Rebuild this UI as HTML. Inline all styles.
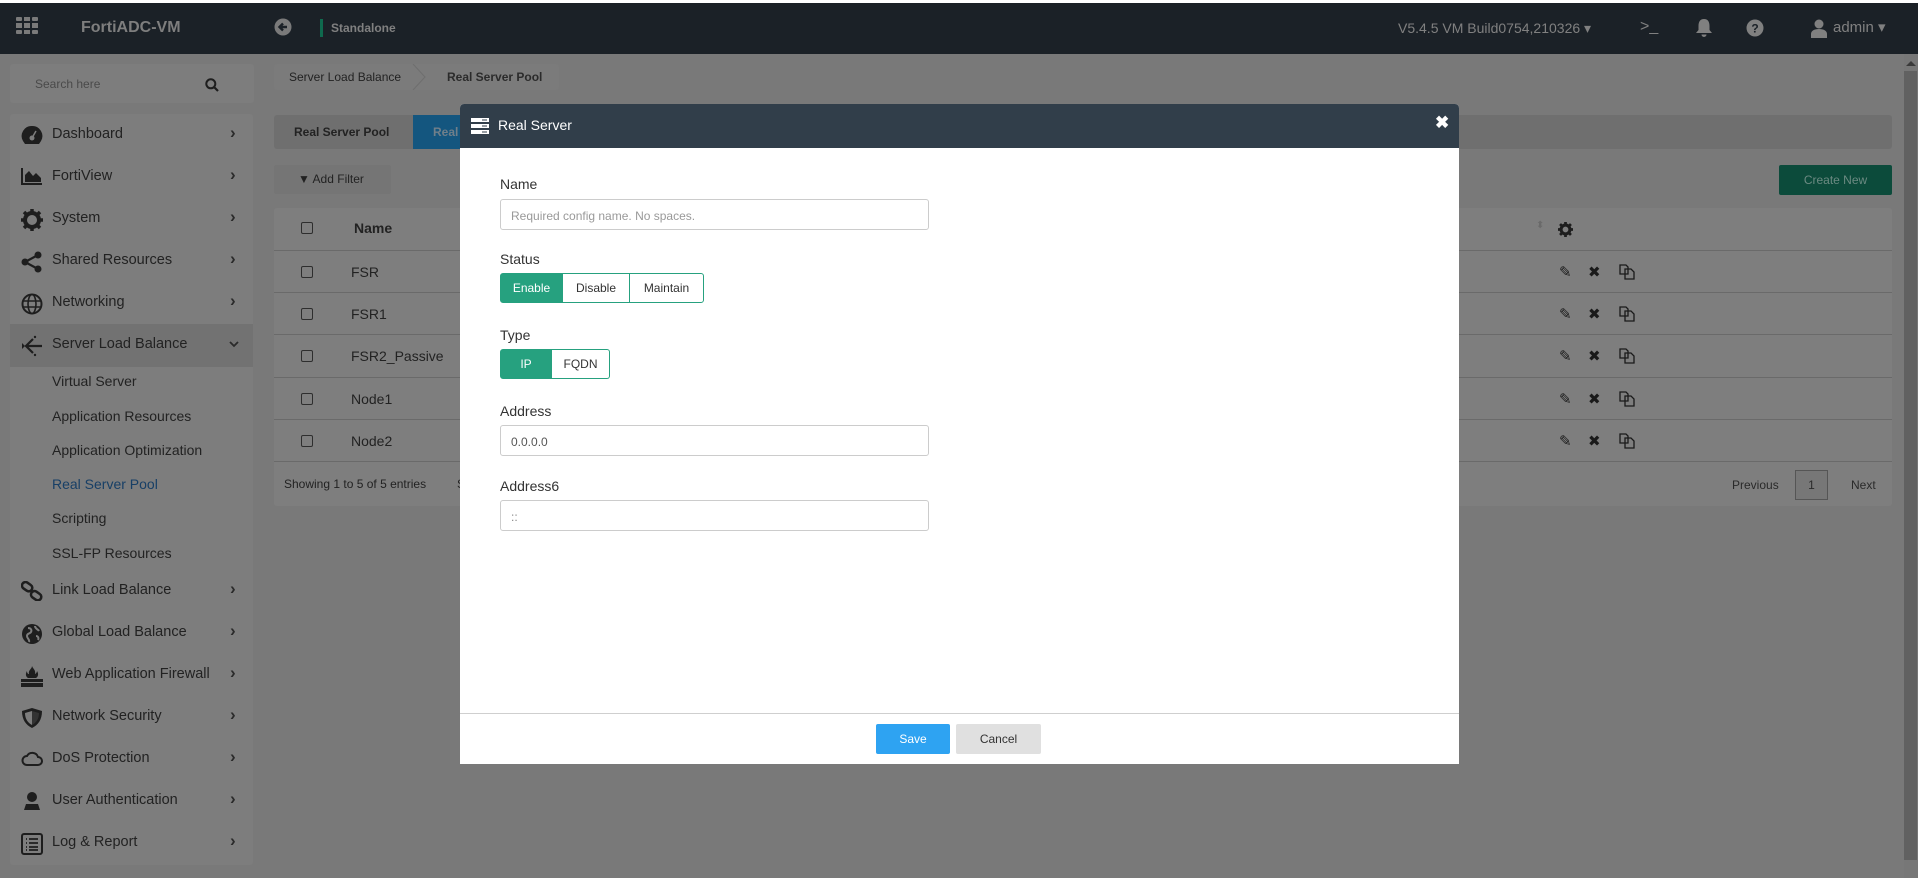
<!DOCTYPE html>
<html><head><meta charset="utf-8"><style>
*{box-sizing:border-box;margin:0;padding:0}
body{width:1918px;height:878px;overflow:hidden;background:#797979;font-family:"Liberation Sans",sans-serif;position:relative;color:#1e1e1e}
.a{position:absolute}
.hdr{left:0;top:0;width:1918px;height:54px;background:#1b2127;color:#7d7d7d}
.menu{left:10px;top:114px;width:243px;height:751px;background:#7d7d7d;border-radius:3px}
.mi{position:absolute;left:0;width:243px;height:42px;font-size:14.5px;color:#222}
.mi .t{position:absolute;left:42px;top:12px}
.mi .c{position:absolute;left:220px;top:9px;font-size:17px;font-weight:bold;color:#2a2a2a}
.mi svg{position:absolute;left:11px;top:11px}
.sub{position:absolute;left:42px;font-size:14px;color:#222}
.panel{background:#7e7e7e;border-radius:3px}
.row{position:absolute;left:0;width:1618px;height:42px;border-top:1px solid #6a6a6a}
.cb{position:absolute;left:27px;top:15px;width:12px;height:12px;border:1px solid #2e2e2e;border-radius:2px}
.rn{position:absolute;left:77px;top:13px;font-size:14px;color:#222}
.act{position:absolute;top:12px;font-size:15px;color:#1a1a1a}
.cp{position:absolute;left:1345px;top:13px}
.lbl{position:absolute;left:500px;font-size:14px;color:#333}
.inp{position:absolute;left:500px;width:429px;height:31px;border:1px solid #ccc;border-radius:3px;font-size:12px;padding:9px 10px;color:#555}
.bg{position:absolute;height:30px;border:1px solid #26a17f;font-size:12px;text-align:center;line-height:28px;color:#333;background:#fff}
.on{background:#26a17f;color:#fff}
</style></head><body>
<div class="a" style="left:0;top:0;width:1918px;height:3px;background:#fff"></div>
<div class="a hdr" style="top:3px;height:51px">
  <svg class="a" style="left:16px;top:14px" width="22" height="17" viewBox="0 0 22 17"><g fill="#7a7a7a"><rect x="0" y="0" width="6" height="4" rx="1"/><rect x="8" y="0" width="6" height="4"/><rect x="16" y="0" width="6" height="4" rx="1"/><rect x="0" y="6" width="6" height="5"/><rect x="8" y="6" width="6" height="5"/><rect x="16" y="6" width="6" height="5"/><rect x="0" y="13" width="6" height="4" rx="1"/><rect x="8" y="13" width="6" height="4"/><rect x="16" y="13" width="6" height="4" rx="1"/></g></svg>
  <div class="a" style="left:81px;top:16px;font-size:16px;font-weight:bold;color:#7e7e7e">FortiADC-VM</div>
  <svg class="a" style="left:274px;top:15px" width="18" height="18" viewBox="0 0 18 18"><circle cx="9" cy="9" r="8.5" fill="#7a7a7a"/><path d="M13 9H6M9 5.5L5.5 9 9 12.5" stroke="#1b2127" stroke-width="2.4" fill="none"/></svg>
  <div class="a" style="left:320px;top:16px;width:3px;height:18px;background:#0f6a4e"></div>
  <div class="a" style="left:331px;top:18px;font-size:12px;font-weight:bold;color:#808080">Standalone</div>
  <div class="a" style="left:1398px;top:17px;font-size:14px;color:#808080">V5.4.5 VM Build0754,210326 ▾</div>
  <div class="a" style="left:1640px;top:15px;font-size:16px;color:#808080">&gt;_</div>
  <svg class="a" style="left:1695px;top:15px" width="18" height="20" viewBox="0 0 18 20"><path d="M9 1C5 1 3.5 4 3.5 8v4L1 15h16l-2.5-3V8C14.5 4 13 1 9 1zM6.5 16.5a2.5 2.5 0 0 0 5 0z" fill="#808080"/></svg>
  <svg class="a" style="left:1746px;top:16px" width="18" height="18" viewBox="0 0 18 18"><circle cx="9" cy="9" r="8.5" fill="#808080"/><text x="9" y="13.5" font-size="12" font-weight="bold" text-anchor="middle" fill="#1b2127" font-family="Liberation Sans">?</text></svg>
  <svg class="a" style="left:1811px;top:16px" width="16" height="19" viewBox="0 0 16 19"><circle cx="8" cy="5" r="4.5" fill="#808080"/><path d="M0 19v-4c0-3 3-5 8-5s8 2 8 5v4z" fill="#808080"/></svg>
  <div class="a" style="left:1833px;top:15px;font-size:15px;color:#808080">admin ▾</div>
</div>
<div class="a" style="left:1904px;top:54px;width:14px;height:824px;background:#777"></div>
<div class="a" style="left:1906px;top:61px;width:0;height:0;border-left:5px solid transparent;border-right:5px solid transparent;border-bottom:5px solid #3a3a3a"></div>
<div class="a" style="left:1904px;top:71px;width:13px;height:789px;background:#616161"></div>
<div class="a panel" style="left:10px;top:64px;width:244px;height:39px;background:#7d7d7d"></div>
<div class="a" style="left:35px;top:77px;font-size:12px;color:#4a4a4a">Search here</div>
<svg class="a" style="left:205px;top:78px" width="14" height="14" viewBox="0 0 14 14"><circle cx="5.8" cy="5.8" r="4.5" stroke="#1e1e1e" stroke-width="2" fill="none"/><path d="M9 9l4 4" stroke="#1e1e1e" stroke-width="2.2"/></svg>
<div class="a menu">
 <div class="mi" style="top:0"><svg width="22" height="20" viewBox="0 0 22 20"><path d="M11 1A10 10 0 0 0 2 16l2 3h14l2-3A10 10 0 0 0 11 1z" fill="#1e1e1e"/><circle cx="11" cy="13" r="2.5" fill="#7d7d7d"/><path d="M11 13l4-7" stroke="#7d7d7d" stroke-width="1.5"/></svg><span class="t">Dashboard</span><span class="c">›</span></div>
 <div class="mi" style="top:42px"><svg width="22" height="18" viewBox="0 0 22 18"><path d="M1 1v16h20" stroke="#1e1e1e" stroke-width="2" fill="none"/><path d="M4 15V8l4-4 4 5 3-3 5 5v4z" fill="#1e1e1e"/></svg><span class="t">FortiView</span><span class="c">›</span></div>
 <div class="mi" style="top:84px"><svg width="22" height="22" viewBox="0 0 22 22"><circle cx="11" cy="11" r="7" fill="none" stroke="#1e1e1e" stroke-width="4"/><path d="M11 0v5M11 17v5M0 11h5M17 11h5M3 3l3.5 3.5M15.5 15.5L19 19M3 19l3.5-3.5M15.5 6.5L19 3" stroke="#1e1e1e" stroke-width="3.5"/></svg><span class="t">System</span><span class="c">›</span></div>
 <div class="mi" style="top:126px"><svg width="22" height="22" viewBox="0 0 22 22"><circle cx="17" cy="4" r="3.5" fill="#1e1e1e"/><circle cx="4" cy="11" r="3.5" fill="#1e1e1e"/><circle cx="17" cy="18" r="3.5" fill="#1e1e1e"/><path d="M17 4L4 11l13 7" stroke="#1e1e1e" stroke-width="2.2" fill="none"/></svg><span class="t">Shared Resources</span><span class="c">›</span></div>
 <div class="mi" style="top:168px"><svg width="22" height="22" viewBox="0 0 22 22"><circle cx="11" cy="11" r="9.5" fill="none" stroke="#1e1e1e" stroke-width="2"/><ellipse cx="11" cy="11" rx="4" ry="9.5" fill="none" stroke="#1e1e1e" stroke-width="1.6"/><path d="M2 8h18M2 14h18" stroke="#1e1e1e" stroke-width="1.6"/></svg><span class="t">Networking</span><span class="c">›</span></div>
 <div class="mi" style="top:210px;background:#727272;height:43px"><svg width="22" height="22" viewBox="0 0 22 22"><path d="M12 4L5 11l7 7M5 11h16" stroke="#1e1e1e" stroke-width="2.2" fill="none"/><path d="M1 8v6l3-3z" fill="#1e1e1e"/><circle cx="14" cy="2" r="1.2" fill="#1e1e1e"/><circle cx="14" cy="20" r="1.2" fill="#1e1e1e"/></svg><span class="t">Server Load Balance</span><svg style="left:219px;top:17px" width="10" height="7" viewBox="0 0 10 7"><path d="M1 1l4 4 4-4" stroke="#2a2a2a" stroke-width="1.8" fill="none"/></svg></div>
 <div class="sub" style="top:259px">Virtual Server</div>
 <div class="sub" style="top:294px">Application Resources</div>
 <div class="sub" style="top:328px">Application Optimization</div>
 <div class="sub" style="top:362px;color:#173f66">Real Server Pool</div>
 <div class="sub" style="top:396px">Scripting</div>
 <div class="sub" style="top:431px">SSL-FP Resources</div>
 <div class="mi" style="top:456px"><svg width="22" height="20" viewBox="0 0 22 20"><rect x="1" y="2" width="11" height="7" rx="3.5" transform="rotate(35 6 5)" fill="none" stroke="#1e1e1e" stroke-width="2.5"/><rect x="10" y="11" width="11" height="7" rx="3.5" transform="rotate(35 15 14)" fill="none" stroke="#1e1e1e" stroke-width="2.5"/></svg><span class="t">Link Load Balance</span><span class="c">›</span></div>
 <div class="mi" style="top:498px"><svg width="22" height="22" viewBox="0 0 22 22"><circle cx="11" cy="11" r="10" fill="#1e1e1e"/><path d="M7 5c3 0 4 2 3 4s-4 1-4 4 3 3 2 6M14 3c0 3 3 3 4 5M15 13c2 0 3 2 2 4" stroke="#7d7d7d" stroke-width="2" fill="none"/></svg><span class="t">Global Load Balance</span><span class="c">›</span></div>
 <div class="mi" style="top:540px"><svg width="22" height="22" viewBox="0 0 22 22"><path d="M11 1c1 3 4 4 3 8 2-1 2-3 2-3 2 3 1 6-1 7H7c-2-1-3-4-1-7 0 2 1 3 2 3-1-4 3-5 3-8z" fill="#1e1e1e"/><rect x="0" y="14" width="22" height="3" fill="#1e1e1e"/><rect x="0" y="18" width="22" height="4" fill="#1e1e1e"/></svg><span class="t">Web Application Firewall</span><span class="c">›</span></div>
 <div class="mi" style="top:582px"><svg width="22" height="22" viewBox="0 0 22 22"><path d="M11 1L1 4c0 9 4 14 10 17 6-3 10-8 10-17z" fill="#1e1e1e"/><path d="M11 4L4 6c0 6 3 10 7 12z" fill="#7d7d7d"/><path d="M11 4l7 2c0 6-3 10-7 12z" fill="#333"/></svg><span class="t">Network Security</span><span class="c">›</span></div>
 <div class="mi" style="top:624px"><svg width="22" height="18" viewBox="0 0 22 18"><path d="M6 16h11a4 4 0 0 0 0-8 6 6 0 0 0-11-1A4.5 4.5 0 0 0 6 16z" fill="none" stroke="#1e1e1e" stroke-width="2"/></svg><span class="t">DoS Protection</span><span class="c">›</span></div>
 <div class="mi" style="top:666px"><svg width="22" height="20" viewBox="0 0 22 20"><circle cx="11" cy="6" r="5" fill="#1e1e1e"/><path d="M3 19l2-6h12l2 6z" fill="#1e1e1e"/></svg><span class="t">User Authentication</span><span class="c">›</span></div>
 <div class="mi" style="top:708px"><svg width="22" height="22" viewBox="0 0 22 22"><rect x="1" y="1" width="20" height="20" rx="2" fill="none" stroke="#1e1e1e" stroke-width="2"/><path d="M5 6h1M8 6h9M5 10h1M8 10h9M5 14h1M8 14h9M5 17h1M8 17h9" stroke="#1e1e1e" stroke-width="1.8"/></svg><span class="t">Log &amp; Report</span><span class="c">›</span></div>
</div>
<div class="a panel" style="left:274px;top:64px;width:285px;height:26px;background:#7b7b7b"></div>
<div class="a" style="left:289px;top:70px;font-size:12px;color:#222">Server Load Balance</div>
<svg class="a" style="left:412px;top:64px" width="14" height="26"><path d="M1 0l12 13L1 26" stroke="#6e6e6e" fill="none"/></svg>
<div class="a" style="left:447px;top:70px;font-size:12px;font-weight:bold;color:#2b2b2b">Real Server Pool</div>
<div class="a panel" style="left:274px;top:115px;width:1618px;height:34px;background:#6f6f6f"></div>
<div class="a" style="left:294px;top:125px;font-size:12px;font-weight:bold;color:#222">Real Server Pool</div>
<div class="a" style="left:413px;top:115px;width:50px;height:34px;background:#14567f"></div>
<div class="a" style="left:433px;top:125px;font-size:12px;font-weight:bold;color:#707f8a">Real</div>
<div class="a" style="left:274px;top:165px;width:117px;height:29px;background:#757575;border-radius:2px"></div>
<div class="a" style="left:298px;top:172px;font-size:12px;color:#222">▼ Add Filter</div>
<div class="a" style="left:1779px;top:165px;width:113px;height:30px;background:#0c4b3b;border-radius:2px;color:#6c8a82;font-size:12px;text-align:center;line-height:30px">Create New</div>
<div class="a panel" style="left:274px;top:208px;width:1618px;height:298px">
  <div class="cb" style="left:27px;top:14px"></div>
  <div class="a" style="left:80px;top:12px;font-size:14px;font-weight:bold;color:#222">Name</div>
  <div class="a" style="left:1262px;top:12px;font-size:10px;color:#6a6a6a">⬍</div>
  <svg class="a" style="left:1284px;top:14px" width="15" height="15" viewBox="0 0 22 22"><circle cx="11" cy="11" r="6.5" fill="none" stroke="#1e1e1e" stroke-width="4.5"/><path d="M11 0v5M11 17v5M0 11h5M17 11h5M3 3l3.5 3.5M15.5 15.5L19 19M3 19l3.5-3.5M15.5 6.5L19 3" stroke="#1e1e1e" stroke-width="4"/></svg>
  <div class="row" style="top:42px"><div class="cb"></div><div class="rn">FSR</div><div class="act" style="left:1285px">✎</div><div class="act" style="left:1314px">✖</div><svg class="cp" width="16" height="16" viewBox="0 0 16 16"><path d="M1 1h6l2 2v7H1zM6 5h6l3 3v7H6z" fill="none" stroke="#1a1a1a" stroke-width="1.3"/></svg></div>
  <div class="row" style="top:84px"><div class="cb"></div><div class="rn">FSR1</div><div class="act" style="left:1285px">✎</div><div class="act" style="left:1314px">✖</div><svg class="cp" width="16" height="16" viewBox="0 0 16 16"><path d="M1 1h6l2 2v7H1zM6 5h6l3 3v7H6z" fill="none" stroke="#1a1a1a" stroke-width="1.3"/></svg></div>
  <div class="row" style="top:126px"><div class="cb"></div><div class="rn">FSR2_Passive</div><div class="act" style="left:1285px">✎</div><div class="act" style="left:1314px">✖</div><svg class="cp" width="16" height="16" viewBox="0 0 16 16"><path d="M1 1h6l2 2v7H1zM6 5h6l3 3v7H6z" fill="none" stroke="#1a1a1a" stroke-width="1.3"/></svg></div>
  <div class="row" style="top:169px"><div class="cb"></div><div class="rn">Node1</div><div class="act" style="left:1285px">✎</div><div class="act" style="left:1314px">✖</div><svg class="cp" width="16" height="16" viewBox="0 0 16 16"><path d="M1 1h6l2 2v7H1zM6 5h6l3 3v7H6z" fill="none" stroke="#1a1a1a" stroke-width="1.3"/></svg></div>
  <div class="row" style="top:211px"><div class="cb"></div><div class="rn">Node2</div><div class="act" style="left:1285px">✎</div><div class="act" style="left:1314px">✖</div><svg class="cp" width="16" height="16" viewBox="0 0 16 16"><path d="M1 1h6l2 2v7H1zM6 5h6l3 3v7H6z" fill="none" stroke="#1a1a1a" stroke-width="1.3"/></svg></div>
  <div class="row" style="top:253px;height:45px"></div>
  <div class="a" style="left:10px;top:269px;font-size:12px;color:#222">Showing 1 to 5 of 5 entries</div>
  <div class="a" style="left:183px;top:269px;font-size:12px;color:#222">S</div>
  <div class="a" style="left:1458px;top:270px;font-size:12px;color:#2a2a2a">Previous</div>
  <div class="a" style="left:1521px;top:262px;width:33px;height:30px;border:1px solid #555;background:#777;font-size:12px;text-align:center;line-height:28px;color:#2a2a2a">1</div>
  <div class="a" style="left:1577px;top:270px;font-size:12px;color:#2a2a2a">Next</div>
</div>
<div class="a" style="left:460px;top:104px;width:999px;height:660px;background:#fff;border-radius:4px 4px 0 0;overflow:hidden">
  <div class="a" style="left:0;top:0;width:999px;height:44px;background:#313e4a"></div>
  <svg class="a" style="left:11px;top:14px" width="18" height="16" viewBox="0 0 18 16"><rect x="0" y="0" width="18" height="4" fill="#fff"/><rect x="0" y="6" width="18" height="4" fill="#fff"/><rect x="0" y="12" width="18" height="4" fill="#fff"/><path d="M11 2h5M11 8h5M11 14h5" stroke="#313e4a" stroke-width="1"/></svg>
  <div class="a" style="left:38px;top:13px;font-size:14px;color:#fff">Real Server</div>
  <div class="a" style="left:975px;top:9px;font-size:17px;color:#fff;font-weight:bold">✖</div>
  <div class="a" style="left:0;top:609px;width:999px;height:1px;background:#cfcfcf"></div>
  <div class="a" style="left:416px;top:620px;width:74px;height:30px;background:#2ea3f2;border-radius:2px;color:#fff;font-size:12px;text-align:center;line-height:30px">Save</div>
  <div class="a" style="left:496px;top:620px;width:85px;height:30px;background:#e0e0e0;border-radius:2px;color:#333;font-size:12px;text-align:center;line-height:30px">Cancel</div>
</div>
<div class="lbl" style="top:176px">Name</div>
<div class="inp" style="top:199px;color:#999">Required config name. No spaces.</div>
<div class="lbl" style="top:251px">Status</div>
<div class="bg on" style="left:500px;top:273px;width:63px;border-radius:3px 0 0 3px">Enable</div>
<div class="bg" style="left:563px;top:273px;width:67px;border-left:none">Disable</div>
<div class="bg" style="left:629px;top:273px;width:75px;border-radius:0 3px 3px 0">Maintain</div>
<div class="lbl" style="top:327px">Type</div>
<div class="bg on" style="left:500px;top:349px;width:52px;border-radius:3px 0 0 3px">IP</div>
<div class="bg" style="left:552px;top:349px;width:58px;border-left:none;border-radius:0 3px 3px 0">FQDN</div>
<div class="lbl" style="top:403px">Address</div>
<div class="inp" style="top:425px">0.0.0.0</div>
<div class="lbl" style="top:478px">Address6</div>
<div class="inp" style="top:500px;color:#888">::</div>
</body></html>
